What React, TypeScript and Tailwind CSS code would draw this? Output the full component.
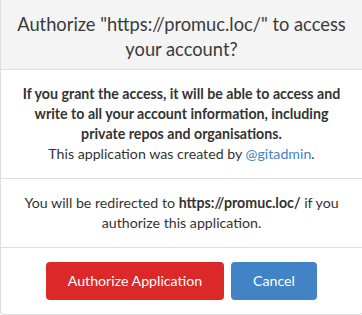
import React from 'react';

const App: React.FC = () => {
  return (
    <div className="w-[362px] h-[315px] overflow-hidden bg-white font-['Lato',sans-serif] text-[14.2px] leading-[20px] text-[#333333]">
      <div className="w-[363px] border border-t-0 border-[#dedede] rounded-b-[4px] bg-white">
        {/* Header */}
        <div className="bg-[#f4f4f4] border-b border-[#dedede] px-4 pt-[12px] pb-[7px] text-center text-[18.3px] leading-[25px] text-[#3a3a3a]">
          Authorize "https://promuc.loc/" to access your account?
        </div>

        {/* Warning */}
        <div className="px-4 py-[14px] text-center border-b border-[#dedede]">
          <p className="font-bold">
            If you grant the access, it will be able to access and write to all your account information, including private repos and organisations.
          </p>
          <p>
            This application was created by <a href="#" className="text-[#4183c4]">@gitadmin</a>.
          </p>
        </div>

        {/* Redirect */}
        <div className="px-4 py-[14px] text-center border-b border-[#dedede]">
          You will be redirected to <span className="font-bold">https://promuc.loc/</span> if you authorize this application.
        </div>

        {/* Actions */}
        <div className="flex justify-center gap-[7px] py-[14px]">
          <button className="h-[38px] w-[178px] rounded-[4px] bg-[#db2828] text-white">
            Authorize Application
          </button>
          <button className="h-[38px] w-[86px] rounded-[4px] bg-[#4183c4] text-white">
            Cancel
          </button>
        </div>
      </div>
    </div>
  );
};

export default App;
